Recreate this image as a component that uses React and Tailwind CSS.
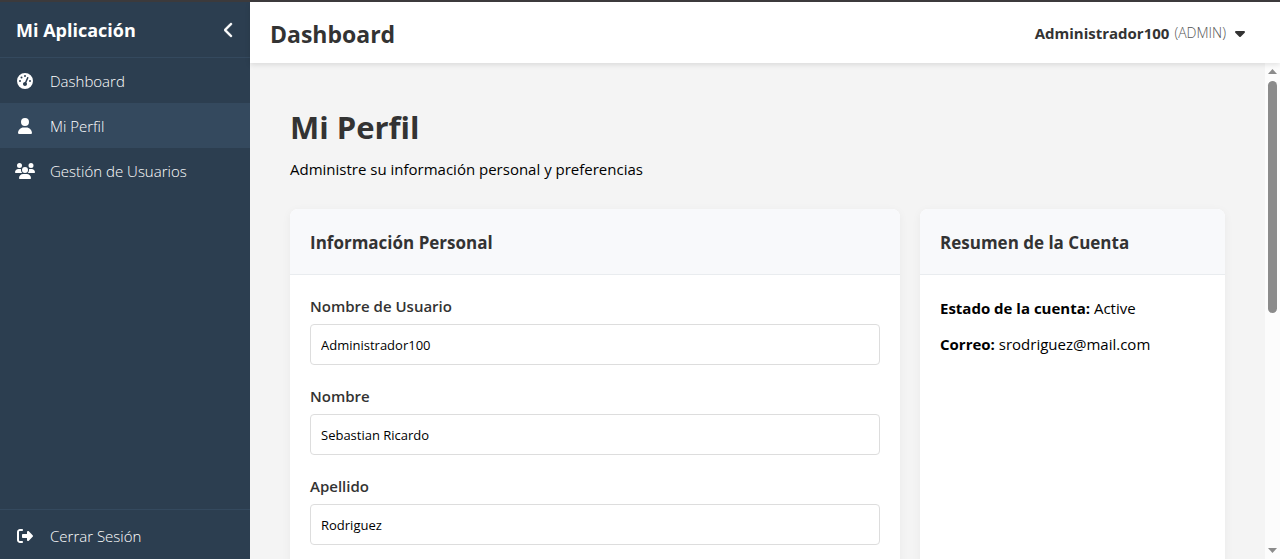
import { useState } from "react";
import {
  FaCaretDown,
  FaChevronLeft,
  FaGaugeHigh,
  FaRightFromBracket,
  FaUser,
  FaUsers,
} from "react-icons/fa6";

const navItems = [
  { label: "Dashboard", icon: FaGaugeHigh },
  { label: "Mi Perfil", icon: FaUser, active: true },
  { label: "Gestión de Usuarios", icon: FaUsers },
];

const initialFields = [
  { id: "username", label: "Nombre de Usuario", value: "Administrador100" },
  { id: "firstName", label: "Nombre", value: "Sebastian Ricardo" },
  { id: "lastName", label: "Apellido", value: "Rodriguez" },
];

function Sidebar() {
  return (
    <aside className="flex w-[250px] shrink-0 flex-col bg-[#2c3e50] text-white">
      <div className="flex h-14 items-center justify-between border-b border-[#34495e] px-4">
        <h3 className="text-lg font-bold">Mi Aplicación</h3>
        <button type="button" aria-label="Contraer menú" className="flex">
          <FaChevronLeft className="h-4 w-[10px] stroke-current stroke-[16]" />
        </button>
      </div>
      <nav className="flex-1">
        {navItems.map(({ label, icon: Icon, active }) => (
          <a
            key={label}
            href="#"
            aria-current={active ? "page" : undefined}
            className={
              active
                ? "flex h-[45px] items-center gap-[15px] bg-[#34495e] px-[15px]"
                : "flex h-[45px] items-center gap-[15px] px-[15px]"
            }
          >
            <Icon className="h-4 w-5 shrink-0" />
            <span className="font-light">{label}</span>
          </a>
        ))}
      </nav>
      <div className="border-t border-[#34495e] pt-1 pb-px">
        <button type="button" className="flex h-11 w-full items-center gap-[15px] px-[15px]">
          <FaRightFromBracket className="h-4 w-5 shrink-0" />
          <span className="font-light">Cerrar Sesión</span>
        </button>
      </div>
    </aside>
  );
}

function Header() {
  return (
    <header className="relative z-10 flex h-[61px] shrink-0 items-center justify-between bg-white pr-[35px] pl-5 text-[#333] shadow-[0_2px_5px_rgba(0,0,0,0.1)]">
      <h1 className="pt-[2px] text-[23px] leading-8 font-bold">Dashboard</h1>
      <button type="button" className="flex items-center gap-[5px]">
        <span className="font-bold">Administrador100</span>
        <span className="text-sm font-light text-[#555]">(ADMIN)</span>
        <FaCaretDown className="ml-1 h-4 w-[10px]" />
      </button>
    </header>
  );
}

function Card({ title, children }) {
  return (
    <section className="overflow-hidden rounded-t-lg bg-white shadow-[0_2px_10px_rgba(0,0,0,0.05)]">
      <div className="flex h-[66px] items-center border-b border-[#e9ecef] bg-[#f8f9fb] px-5 pt-[2px]">
        <h3 className="text-[17px] leading-6 font-bold text-[#333]">{title}</h3>
      </div>
      <div className="p-5">{children}</div>
    </section>
  );
}

function Scrollbar() {
  return (
    <div aria-hidden="true" className="flex w-[15px] shrink-0 flex-col items-center bg-[#fcfcfc] py-[6px]">
      <svg viewBox="0 0 9 5" className="mb-[7px] h-[5px] w-[9px] shrink-0 fill-[#8b8b8b]">
        <path d="M4.5 0 9 5H0Z" />
      </svg>
      <div className="flex w-[9px] flex-1 flex-col pb-1">
        <div className="h-1/2 rounded-full bg-[#8b8b8b]" />
      </div>
      <svg viewBox="0 0 9 5" className="h-[5px] w-[9px] shrink-0 fill-[#8b8b8b]">
        <path d="M0 0h9L4.5 5Z" />
      </svg>
    </div>
  );
}

export default function App() {
  const [fields, setFields] = useState(initialFields);

  const update = (id, value) =>
    setFields((current) => current.map((f) => (f.id === id ? { ...f, value } : f)));

  return (
    <div className="flex h-screen flex-col overflow-hidden border-t-2 border-[#3c3a3c] font-['Open_Sans','Noto_Sans',sans-serif] text-[15px] leading-5 text-black">
      <div className="flex min-h-0 flex-1">
        <Sidebar />
        <div className="flex min-w-0 flex-1 flex-col">
          <Header />
          <div className="flex min-h-0 flex-1">
            <main className="flex min-w-0 flex-1 flex-col overflow-hidden bg-[#f4f4f4] px-10 pt-10">
              <h2 className="text-[31px] leading-[48px] font-bold text-[#333]">Mi Perfil</h2>
              <p className="mt-2">Administre su información personal y preferencias</p>
              <div className="mt-[30px] grid flex-1 grid-cols-[2fr_1fr] gap-5">
                <Card title="Información Personal">
                  <form className="flex flex-col gap-5">
                    {fields.map(({ id, label, value }) => (
                      <div key={id} className="flex flex-col gap-[6px]">
                        <label htmlFor={id} className="leading-[23px] font-semibold text-[#333]">
                          {label}
                        </label>
                        <input
                          id={id}
                          type="text"
                          value={value}
                          onChange={(e) => update(id, e.target.value)}
                          className="h-[41px] w-full rounded border border-[#ddd] bg-white px-[10px] text-[13px]"
                        />
                      </div>
                    ))}
                  </form>
                </Card>
                <Card title="Resumen de la Cuenta">
                  <div className="flex flex-col gap-4 pt-[3px]">
                    <p>
                      <strong className="font-bold">Estado de la cuenta:</strong> Active
                    </p>
                    <p>
                      <strong className="font-bold">Correo:</strong> srodriguez@mail.com
                    </p>
                  </div>
                </Card>
              </div>
            </main>
            <Scrollbar />
          </div>
        </div>
      </div>
    </div>
  );
}
